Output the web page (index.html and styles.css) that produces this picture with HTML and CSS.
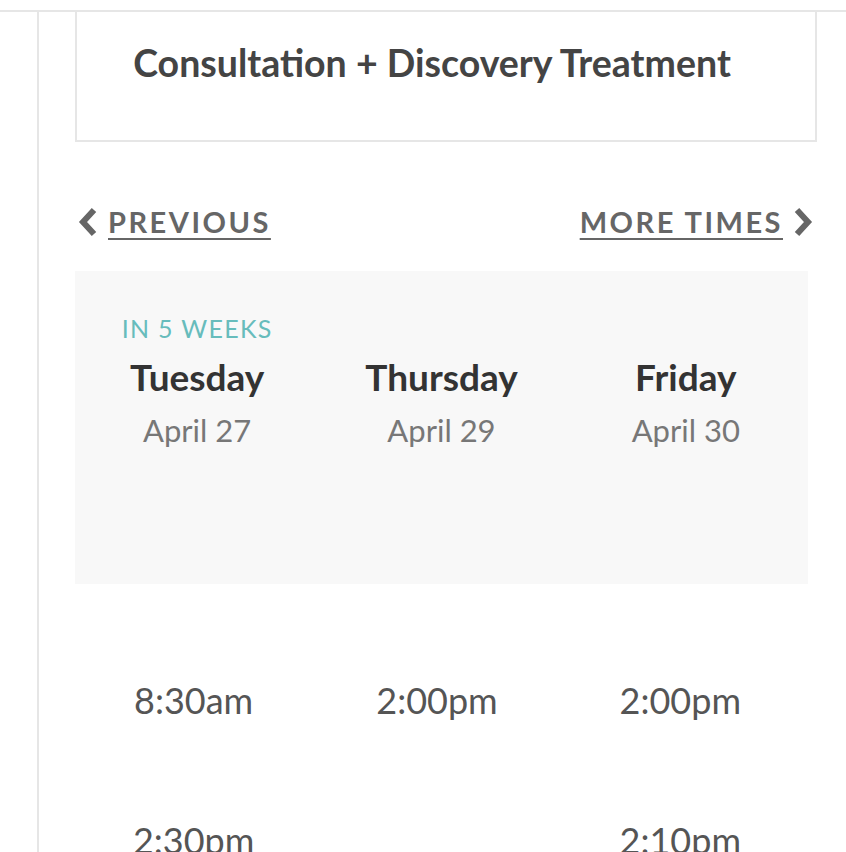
FILE: index.html
```html
<!DOCTYPE html>
<html lang="en">
<head>
    <meta charset="UTF-8">
    <meta name="viewport" content="width=device-width, initial-scale=1.0">
    <title>Book an appointment</title>
    <link rel="stylesheet" href="styles.css">
</head>
<body>
    <div class="screen">
        <div class="sheet">
            <div class="service-card">
                <h1>Consultation + Discovery Treatment</h1>
            </div>

            <nav class="week-nav">
                <a href="#" class="nav-link">
                    <svg class="chevron" viewBox="0 0 20 30" aria-hidden="true"><polyline points="16,3 5,15 16,27"/></svg>
                    <span>PREVIOUS</span>
                </a>
                <a href="#" class="nav-link next">
                    <span>MORE TIMES</span>
                    <svg class="chevron" viewBox="0 0 20 30" aria-hidden="true"><polyline points="4,3 15,15 4,27"/></svg>
                </a>
            </nav>

            <div class="days">
                <div class="day">
                    <div class="day-label">IN 5 WEEKS</div>
                    <div class="day-name">Tuesday</div>
                    <div class="day-date">April 27</div>
                </div>
                <div class="day">
                    <div class="day-label"></div>
                    <div class="day-name">Thursday</div>
                    <div class="day-date">April 29</div>
                </div>
                <div class="day">
                    <div class="day-label"></div>
                    <div class="day-name">Friday</div>
                    <div class="day-date">April 30</div>
                </div>
            </div>

            <div class="slots">
                <a href="#" class="slot">8:30am</a>
                <a href="#" class="slot">2:00pm</a>
                <a href="#" class="slot">2:00pm</a>
                <a href="#" class="slot">2:30pm</a>
                <span class="slot"></span>
                <a href="#" class="slot">2:10pm</a>
            </div>
        </div>
    </div>
</body>
</html>
```

FILE: styles.css
```css
html, body {
    margin: 0;
    height: 100%;
    overflow: hidden;
}
body {
    font-family: Lato, "Open Sans", sans-serif;
    background: #fff;
    color: #444;
}
.screen {
    margin-top: 10px;
    border-top: 2px solid #e6e6e6;
    height: 840px;
}
.sheet {
    margin-left: 37px;
    border-left: 2px solid #e6e6e6;
    padding: 0 29px 0 36px;
    height: 100%;
}
.service-card {
    border: 2px solid #e6e6e6;
    border-top: 0;
    height: 128px;
    text-align: center;
}
.service-card h1 {
    margin: 0;
    padding: 30px 28px 0 0;
    font-size: 37.5px;
    line-height: 42px;
    font-weight: 700;
    color: #444;
}
.week-nav {
    display: flex;
    justify-content: space-between;
    align-items: center;
    margin-top: 62px;
    padding-left: 3px;
}
.nav-link {
    display: flex;
    align-items: center;
    gap: 10px;
    color: #666;
    text-decoration: none;
}
.nav-link.next {
    margin-right: 4px;
}
.nav-link span {
    font-size: 29px;
    line-height: 36px;
    font-weight: 700;
    letter-spacing: 2.5px;
    text-decoration: underline;
    text-decoration-thickness: 2px;
    text-underline-offset: 5px;
}
.chevron {
    width: 20px;
    height: 30px;
    fill: none;
    stroke: #666;
    stroke-width: 6;
    stroke-linecap: butt;
}
.days {
    display: grid;
    grid-template-columns: repeat(3, 1fr);
    margin: 31px 9px 0 0;
    height: 313px;
    background: #f8f8f8;
    padding-top: 42px;
    box-sizing: border-box;
    text-align: center;
}
.day-label {
    height: 30px;
    font-size: 25px;
    line-height: 30px;
    letter-spacing: 1.3px;
    color: #67bcbc;
}
.day-name {
    margin-top: 8px;
    font-size: 37px;
    line-height: 52px;
    font-weight: 700;
    color: #333;
}
.day-date {
    margin-top: 5px;
    font-size: 31px;
    line-height: 44px;
    color: #777;
}
.slots {
    display: grid;
    grid-template-columns: repeat(3, 1fr);
    grid-auto-rows: 140px;
    margin: 92px 15px 0 -3px;
    text-align: center;
}
.slot {
    font-size: 36px;
    line-height: 48px;
    color: #555;
    text-decoration: none;
}
```
